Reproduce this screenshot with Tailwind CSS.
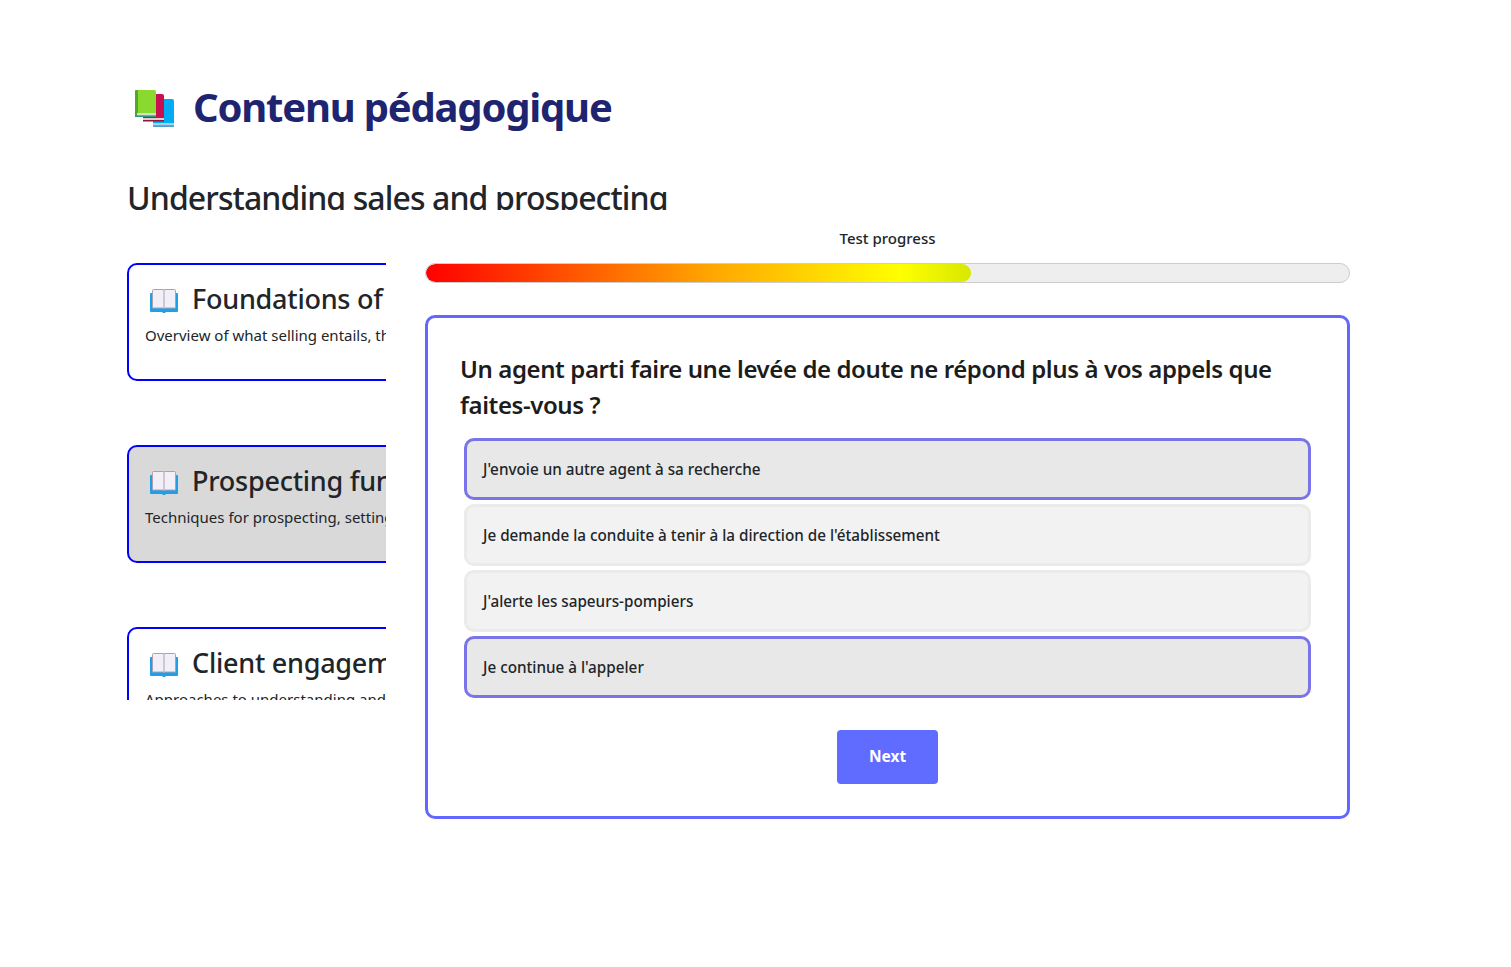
<!DOCTYPE html>
<html lang="fr">
<head>
    <meta charset="UTF-8">
    <meta name="viewport" content="width=device-width, initial-scale=1.0">
    <title>Contenu pédagogique</title>
    <script src="https://cdn.jsdelivr.net/npm/@tailwindcss/browser@4"></script>
</head>
<body class="bg-white font-['Noto_Sans',sans-serif] text-[#212529] min-h-screen overflow-hidden">
    <div class="pl-[127px] pr-[161px] pt-[81px]">
        <!-- page title -->
        <h1 class="flex items-center h-[52px] text-[40px] leading-[52px] font-bold tracking-[-1.2px] text-[#1e2470]">
            <svg class="ml-[6px] mr-[18px] shrink-0" width="42" height="40" viewBox="0 0 42 40">
                <path d="M20 12h19a2 2 0 0 1 2 2v26H22a2 2 0 0 1-2-2z" fill="#00acf5"/>
                <rect x="20" y="36" width="21" height="2.500" fill="#a9cfe0"/>
                <rect x="20" y="38.500" width="21" height="1.500" fill="#4f9fd0"/>
                <path d="M10 7h19a2 2 0 0 1 2 2v23H10z" fill="#c90f50"/>
                <rect x="10" y="31" width="21" height="2" fill="#ddd0d5"/>
                <rect x="10" y="33" width="21" height="1.500" fill="#8e1742"/>
                <rect x="2" y="3" width="21" height="27" rx="2" fill="#8ad92e"/>
                <rect x="2" y="3" width="3" height="27" rx="1" fill="#54a72c"/>
                <rect x="4" y="26" width="19" height="2.500" fill="#d3ddd0"/>
                <rect x="2" y="28.500" width="21" height="1.500" fill="#2d9a73"/>
            </svg>
            Contenu pédagogique
        </h1>

        <div class="mt-[26px] h-[51px] pt-[15px] overflow-hidden">
            <h2 class="text-[32px] leading-[48px] font-medium tracking-[-0.9px] whitespace-nowrap">Understanding sales and prospecting</h2>
        </div>

        <div class="flex">
            <!-- course list, cut off by the column -->
            <div class="w-[259px] h-[490px] shrink-0 overflow-hidden pt-[53px] flex flex-col gap-[64px]">
                <div class="w-[500px] h-[118px] shrink-0 border-2 border-[#0000ff] rounded-[10px] pl-[16px] pt-[16px] whitespace-nowrap">
                    <div class="flex items-center h-[36px] text-[27px] font-medium tracking-[-0.25px]">
                        <svg class="ml-[5px] mr-[14px] mt-[4px] shrink-0" width="28" height="24" viewBox="0 0 28 24">
                            <path d="M0 5a1 1 0 0 1 1-1h26a1 1 0 0 1 1 1v17a1 1 0 0 1-1 1H16l-1 1h-2l-1-1H1a1 1 0 0 1-1-1z" fill="#1f9fe8"/>
                            <path d="M2.500 1.500a1 1 0 0 1 1-1h10l.5 1 .5-1h10a1 1 0 0 1 1 1v17.500h-11l-.5 1-.5-1h-11z" fill="#f3eff9" stroke="#aaa2b0"/>
                            <path d="M14 1.500v18" stroke="#aaa2b0"/>
                        </svg>
                        Foundations of selling
                    </div>
                    <p class="mt-[6px] text-[15px] leading-[24px]">Overview of what selling entails, the key skills</p>
                </div>
                <div class="w-[500px] h-[118px] shrink-0 border-2 border-[#0000ff] rounded-[10px] bg-[#d9d9d9] pl-[16px] pt-[16px] whitespace-nowrap">
                    <div class="flex items-center h-[36px] text-[27px] font-medium tracking-[-0.25px]">
                        <svg class="ml-[5px] mr-[14px] mt-[4px] shrink-0" width="28" height="24" viewBox="0 0 28 24">
                            <path d="M0 5a1 1 0 0 1 1-1h26a1 1 0 0 1 1 1v17a1 1 0 0 1-1 1H16l-1 1h-2l-1-1H1a1 1 0 0 1-1-1z" fill="#1f9fe8"/>
                            <path d="M2.500 1.500a1 1 0 0 1 1-1h10l.5 1 .5-1h10a1 1 0 0 1 1 1v17.500h-11l-.5 1-.5-1h-11z" fill="#f3eff9" stroke="#aaa2b0"/>
                            <path d="M14 1.500v18" stroke="#aaa2b0"/>
                        </svg>
                        Prospecting fundamentals
                    </div>
                    <p class="mt-[6px] text-[15px] leading-[24px]">Techniques for prospecting, setting goals</p>
                </div>
                <div class="w-[500px] h-[118px] shrink-0 border-2 border-[#0000ff] rounded-[10px] pl-[16px] pt-[16px] whitespace-nowrap">
                    <div class="flex items-center h-[36px] text-[27px] font-medium tracking-[-0.25px]">
                        <svg class="ml-[5px] mr-[14px] mt-[4px] shrink-0" width="28" height="24" viewBox="0 0 28 24">
                            <path d="M0 5a1 1 0 0 1 1-1h26a1 1 0 0 1 1 1v17a1 1 0 0 1-1 1H16l-1 1h-2l-1-1H1a1 1 0 0 1-1-1z" fill="#1f9fe8"/>
                            <path d="M2.500 1.500a1 1 0 0 1 1-1h10l.5 1 .5-1h10a1 1 0 0 1 1 1v17.500h-11l-.5 1-.5-1h-11z" fill="#f3eff9" stroke="#aaa2b0"/>
                            <path d="M14 1.500v18" stroke="#aaa2b0"/>
                        </svg>
                        Client engagement
                    </div>
                    <p class="mt-[6px] text-[15px] leading-[24px]">Approaches to understanding and meeting needs</p>
                </div>
            </div>

            <!-- test panel -->
            <div class="ml-[39px] w-[925px] shrink-0">
                <p class="mt-[16px] h-[24px] text-center text-[15px] leading-[24px] font-medium">Test progress</p>
                <div class="mt-[13px] h-[20px] rounded-full border border-[#cccccc] bg-[#eeeeee] overflow-hidden">
                    <div class="w-[545px] h-full rounded-full bg-[linear-gradient(to_right,#ff0000_0%,#ffa500_52%,#ffff00_87%,#d8e800_100%)]"></div>
                </div>

                <div class="mt-[32px] h-[504px] border-[3px] border-[#6366ff] rounded-[10px] pl-[32px] pr-[36px] pt-[33px]">
                    <h3 class="text-[24px] leading-[36px] font-semibold tracking-[-0.4px] text-[#1c1c1c]">Un agent parti faire une levée de doute ne répond plus à vos appels que faites-vous ?</h3>
                    <div class="mt-[15px] ml-[4px] flex flex-col gap-[4px]">
                        <div class="h-[62px] flex items-center px-[16px] rounded-[10px] border-[3px] border-[#7b74e8] bg-[#e8e8e8] text-[15.25px] font-medium">J'envoie un autre agent à sa recherche</div>
                        <div class="h-[62px] flex items-center px-[16px] rounded-[10px] border-[3px] border-[#ebebeb] bg-[#f2f2f2] text-[15.25px] font-medium">Je demande la conduite à tenir à la direction de l'établissement</div>
                        <div class="h-[62px] flex items-center px-[16px] rounded-[10px] border-[3px] border-[#ebebeb] bg-[#f2f2f2] text-[15.25px] font-medium">J'alerte les sapeurs-pompiers</div>
                        <div class="h-[62px] flex items-center px-[16px] rounded-[10px] border-[3px] border-[#7b74e8] bg-[#e8e8e8] text-[15.25px] font-medium">Je continue à l'appeler</div>
                    </div>
                    <div class="mt-[32px] ml-[4px] flex justify-center">
                        <button class="w-[101px] h-[54px] rounded-[4px] bg-[#5f6cff] text-white text-[15.5px] font-bold">Next</button>
                    </div>
                </div>
            </div>
        </div>
    </div>
</body>
</html>
